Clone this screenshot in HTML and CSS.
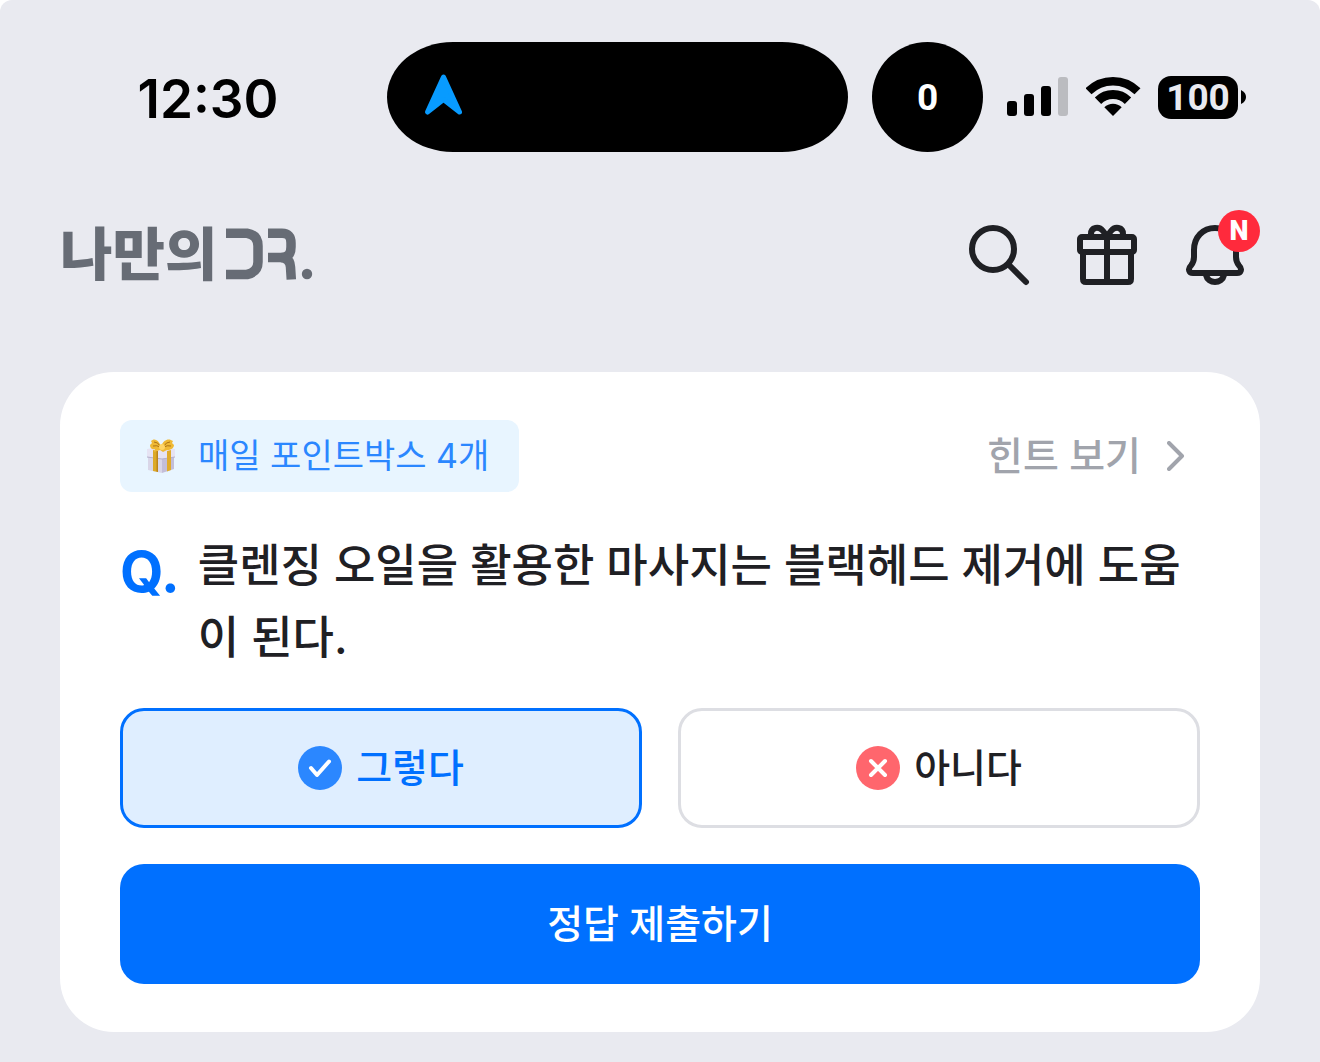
FILE: index.html
```html
<!DOCTYPE html>
<html lang="ko">
<head>
<meta charset="utf-8">
<meta name="viewport" content="width=device-width, initial-scale=1">
<title>나만의 DR.</title>
<link rel="stylesheet" href="styles.css">
</head>
<body>
<div class="screen">
  <div class="status">
    <div class="status-time">12:30</div>
    <div class="island">
      <svg width="40" height="44" viewBox="0 0 40 44" aria-hidden="true"><path d="M19.500 4L35.500 39L19.500 26.500L3.500 39Z" fill="#089bff" stroke="#089bff" stroke-width="5" stroke-linejoin="round"/></svg>
    </div>
    <div class="island-dot">0</div>
    <div class="status-icons">
      <svg width="62" height="42" viewBox="0 0 62 42" aria-hidden="true"><rect x="0" y="25" width="10" height="15" rx="3"/><rect x="17" y="18" width="10" height="22" rx="3"/><rect x="34" y="10" width="10" height="30" rx="3"/><rect x="51" y="1" width="10" height="39" rx="3" fill="#bbbcc0"/></svg>
      <svg width="55" height="42" viewBox="0 0 55 42" aria-hidden="true"><g fill="none" stroke="#000"><path d="M2.500 15.300A34.800 34.800 0 0 1 51.500 15.300" stroke-width="8.500"/><path d="M12 24.800A21.300 21.300 0 0 1 42 24.800" stroke-width="9"/></g><path d="M27 40L18.300 31.300A12.300 12.300 0 0 1 35.700 31.300Z"/></svg>
      <div class="battery"><span class="battery-level">100</span><svg width="5" height="14" viewBox="0 0 5 14" aria-hidden="true"><path d="M0 0Q5 2.500 5 7T0 14Z"/></svg></div>
    </div>
  </div>

  <header class="header">
    <a class="logo" href="#" aria-label="나만의 DR.">
      <span class="logo-text">나만의</span>
      <svg width="90" height="56" viewBox="0 0 90 56" aria-hidden="true"><g fill="none" stroke="#676c75" stroke-width="9.500"><path d="M1 6.200H22Q33 8 33 19V35Q33 45 22 47.500H1"/><path d="M43 6.200H57Q66 6.200 66 16V20Q66 30 57 30.500H43"/><path d="M56 30.500Q65 31 65.500 40L66.300 52.500"/></g><circle cx="82" cy="47" r="5.200" fill="#676c75"/></svg>
    </a>
    <nav class="actions">
      <button class="icon-button" type="button" aria-label="검색"><svg viewBox="0 0 72 72"><circle cx="30" cy="30" r="21"/><path d="M46 46L63 63"/></svg></button>
      <button class="icon-button" type="button" aria-label="선물"><svg viewBox="0 0 72 72"><rect x="9" y="18" width="54" height="15" rx="2"/><path d="M12 33V60Q12 63 15 63H57Q60 63 60 60V33M36 18V63M20 17V15C20 8 28 7 32 12L36 17L40 12C44 7 52 8 52 15V17"/></svg></button>
      <button class="icon-button" type="button" aria-label="알림"><svg viewBox="0 0 72 72"><path d="M36 9C24 9 15 18 15 31V38C15 42 14 44 12 46.500C8.500 50 10 54 14 54H58C62 54 63.500 50 60 46.500C58 44 57 42 57 38V31C57 18 48 9 36 9ZM27 56C29 65.300 43 65.300 45 56"/></svg><span class="badge">N</span></button>
    </nav>
  </header>

  <main class="card">
    <div class="card-top">
      <div class="points">
        <svg width="30" height="36" viewBox="0 0 30 36" aria-hidden="true">
          <path d="M2 12L16 15V35L2 32Z" fill="#d9d6e8"/><path d="M16 15L28 12V31L16 35Z" fill="#c3bed8"/>
          <path d="M1 11L14 9L29 11V19L16 21L1 19Z" fill="#e6e3f3"/><path d="M1 19L16 21L29 19" fill="none" stroke="#b5b0cc"/>
          <path d="M7 12L12 13V34L7 33Z" fill="#dca927"/><path d="M10.500 13L12 13V34L10.500 33.500Z" fill="#bd8418"/><path d="M21 13L25 12V32L21 33.500Z" fill="#e0ab2c"/>
          <path d="M15 8C12 1 8 0 5 3L6 5L4 7C4 10 6 12 9 11L8 14L14 12L17 14L21 12C25 12 28 10 28 7L26 5L27 3C23 0 18 1 15 8Z" fill="#efb935"/>
          <path d="M8 4Q12 4 14 8M7 8Q11 7 14 9M24 4Q20 4 18 8M25 8Q21 7 18 9" fill="none" stroke="#ad7414"/><circle cx="16" cy="9" r="3" fill="#ffd566"/>
        </svg>
        <span>매일 포인트박스 4개</span>
      </div>
      <a class="hint" href="#">힌트 보기<svg width="18" height="30" viewBox="0 0 18 30" aria-hidden="true"><path d="M2 2L15 15L2 28" fill="none" stroke="#a1a4ac" stroke-width="4" stroke-linecap="round" stroke-linejoin="round"/></svg></a>
    </div>
    <div class="question">
      <span class="question-mark">Q.</span>
      <p class="question-text">클렌징 오일을 활용한 마사지는 블랙헤드 제거에 도움이 된다.</p>
    </div>
    <div class="answers">
      <button class="answer answer-selected" type="button" aria-pressed="true"><svg width="44" height="44" viewBox="0 0 44 44" aria-hidden="true"><circle cx="22" cy="22" r="22" fill="#2b87ff"/><path d="M13 22L19 29L31 15.500" fill="none" stroke="#fff" stroke-width="4" stroke-linecap="round" stroke-linejoin="round"/></svg>그렇다</button>
      <button class="answer" type="button" aria-pressed="false"><svg width="44" height="44" viewBox="0 0 44 44" aria-hidden="true"><circle cx="22" cy="22" r="22" fill="#ff666d"/><path d="M15 15L29 29M29 15L15 29" fill="none" stroke="#fff" stroke-width="4" stroke-linecap="round"/></svg>아니다</button>
    </div>
    <button class="submit" type="button">정답 제출하기</button>
  </main>
</div>
</body>
</html>
```

FILE: styles.css
```css
* {
  box-sizing: border-box;
}

body {
  margin: 0;
  background: #fff;
  color: #1f2024;
  font-family: Inter, "Noto Sans CJK KR", sans-serif;
  font-weight: 500;
}

button {
  padding: 0;
  border: 0;
  background: none;
  color: inherit;
  font: inherit;
  cursor: pointer;
}

a {
  color: inherit;
  text-decoration: none;
}

svg {
  display: block;
  flex: none;
}

.screen {
  min-height: 100vh;
  padding: 42px 0 30px;
  border-radius: 12px 12px 0 0;
  background: #e9eaf0;
}

.status {
  display: flex;
  align-items: center;
  height: 110px;
  padding-right: 74px;
  color: #000;
}

.status-time {
  flex: 1;
  padding: 3px 0 0 29px;
  font-size: 53px;
  font-weight: 600;
  text-align: center;
}

.island {
  display: flex;
  align-items: center;
  width: 461px;
  height: 110px;
  padding: 0 37px 4px;
  border-radius: 66px / 55px;
  background: #000;
}

.island-dot {
  display: grid;
  place-items: center;
  width: 111px;
  height: 110px;
  margin: 0 24px;
  border-radius: 50%;
  background: #000;
  color: #fff;
  font-family: Roboto, sans-serif;
  font-size: 37px;
  font-weight: 700;
}

.status-icons {
  display: flex;
  align-items: center;
  gap: 17px;
}

.battery {
  display: flex;
  align-items: center;
  gap: 3px;
}

.battery-level {
  width: 80px;
  border-radius: 13px;
  background: #000;
  color: #e9eaf0;
  font-family: Roboto, sans-serif;
  font-size: 37px;
  font-weight: 700;
  line-height: 43px;
  text-align: center;
}

.header {
  display: flex;
  align-items: center;
  justify-content: space-between;
  padding: 67px 69px 81px 60px;
}

.logo {
  display: flex;
  align-items: center;
  gap: 8px;
  color: #676c75;
}

.logo-text {
  font-size: 57px;
  font-weight: 900;
  line-height: 72px;
}

.actions {
  display: flex;
  gap: 36px;
}

.icon-button {
  position: relative;
  width: 72px;
  height: 72px;
}

.icon-button svg {
  fill: none;
  stroke: #1f2024;
  stroke-width: 6;
  stroke-linecap: round;
  stroke-linejoin: round;
}

.badge {
  position: absolute;
  top: -9px;
  right: -9px;
  width: 42px;
  border-radius: 50%;
  background: #ff2a3c;
  color: #fff;
  font-family: Roboto, sans-serif;
  font-size: 27px;
  font-weight: 900;
  line-height: 42px;
}

.card {
  display: flex;
  flex-direction: column;
  gap: 36px;
  margin: 0 60px;
  padding: 48px 60px;
  border-radius: 54px;
  background: #fff;
}

.card-top {
  display: flex;
  align-items: center;
  justify-content: space-between;
}

.points {
  display: flex;
  align-items: center;
  gap: 22px;
  padding: 0 30px 0 26px;
  border-radius: 12px;
  background: #e8f5ff;
  color: #2b87ff;
  font-size: 34px;
  font-weight: 400;
  line-height: 72px;
}

.hint {
  display: flex;
  align-items: center;
  gap: 26px;
  padding-right: 15px;
  color: #a1a4ac;
  font-size: 39px;
  line-height: 72px;
}

.question {
  display: flex;
  gap: 18px;
  margin-bottom: -2px;
  padding-top: 2px;
}

.question-mark {
  color: #0070ff;
  font-size: 56px;
  font-weight: 700;
  line-height: 84px;
}

.question-text {
  flex: 1;
  margin: 0;
  font-size: 45px;
  line-height: 72px;
  word-break: break-all;
}

.answers {
  display: grid;
  grid-template-columns: 1fr 1fr;
  gap: 36px;
}

.answer {
  display: flex;
  align-items: center;
  justify-content: center;
  gap: 14px;
  height: 120px;
  border: 3px solid #dddee3;
  border-radius: 24px;
  font-size: 39px;
  line-height: 48px;
}

.answer-selected {
  border-color: #0070ff;
  background: #dfeeff;
  color: #0070ff;
}

.submit {
  height: 120px;
  border-radius: 24px;
  background: #0070ff;
  color: #fff;
  font-size: 39px;
  line-height: 48px;
}
```
